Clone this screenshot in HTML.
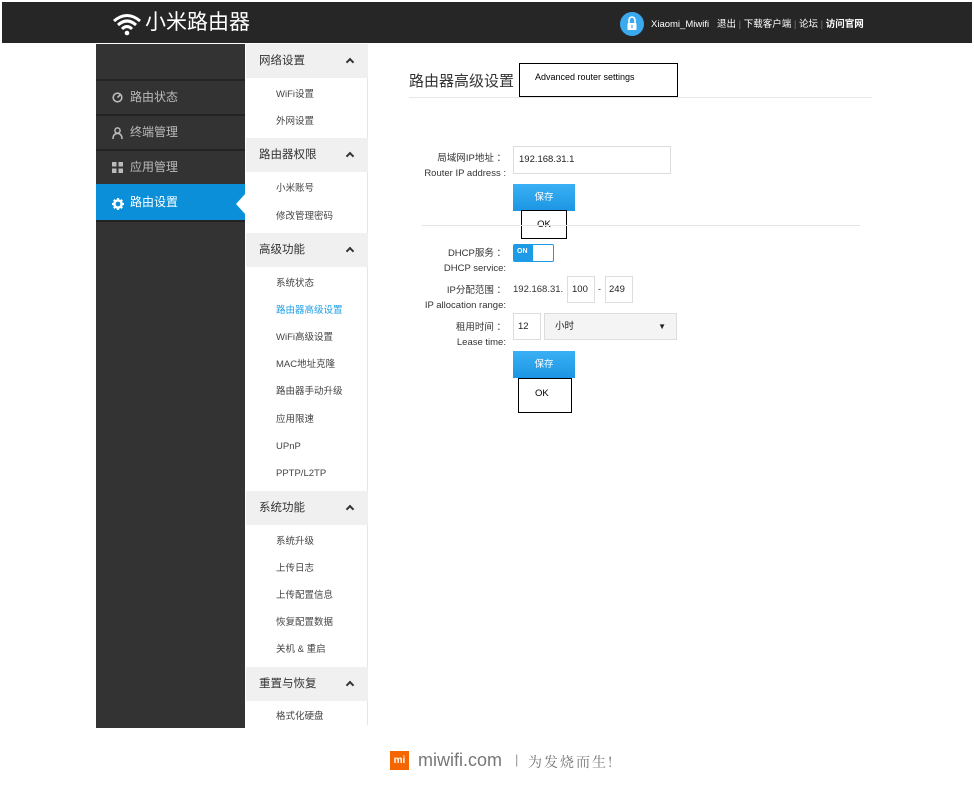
<!DOCTYPE html>
<html><head><meta charset="utf-8"><style>
*{margin:0;padding:0;box-sizing:border-box}
body{width:974px;height:786px;background:#fff;position:relative;overflow:hidden;font-family:"Liberation Sans","Noto Sans CJK SC",sans-serif;font-size:10px;color:#333}
.a{position:absolute}
.top{left:2px;top:2px;width:970px;height:41px;background:#262626}
.side{left:96px;top:44px;width:149px;height:684px;background:#333}
.si{position:absolute;left:0;width:149px;height:33px;background:#333;border-top:2px solid #232323;color:#bbb;font-size:12px;line-height:33px;padding-left:34px}
.si svg{position:absolute;left:16px;top:11px}
.sub{left:246px;top:44px;width:122px;height:681px;border-right:1px solid #e5e5e5}
.h{position:absolute;left:0;width:122px;height:34px;background:#f0f0f0;font-size:11.5px;line-height:34px;padding-left:13px;color:#333}
.h:after{content:"";position:absolute;right:15px;top:15px;width:4px;height:4px;border-left:2px solid #333;border-top:2px solid #333;transform:rotate(45deg)}
.it{position:absolute;left:30px;font-size:9.5px;color:#444;line-height:12px}
.lab{position:absolute;text-align:right;font-size:9.5px;color:#333;line-height:15px}
.inp{position:absolute;border:1px solid #ddd;background:#fff;font-size:9.5px;padding-left:5px;color:#222}
.btn{position:absolute;width:62px;height:27px;background:linear-gradient(#3ab1f5,#1c95e3);color:#fff;font-size:9.5px;text-align:center;line-height:27px}
.box{position:absolute;border:1px solid #000;background:#fff;font-size:9.5px;color:#000}
</style></head><body>
<div class="a top"></div>
<svg class="a" style="left:112px;top:13px" width="30" height="24" viewBox="0 0 30 24"><path d="M2 8 Q15 -3 28 8" stroke="#fff" stroke-width="3" fill="none"/><path d="M6 12 Q15 4 24 12" stroke="#fff" stroke-width="3" fill="none"/><path d="M10 16 Q15 11 20 16" stroke="#fff" stroke-width="3" fill="none"/><circle cx="15" cy="20" r="2.3" fill="#fff"/></svg>
<div class="a" style="left:145px;top:10px;color:#fff;font-size:21px;line-height:26px">小米路由器</div>
<div class="a" style="left:620px;top:12px;width:24px;height:24px;border-radius:50%;background:#3aa9ee"></div>
<svg class="a" style="left:626px;top:16px" width="12" height="15" viewBox="0 0 12 15"><path d="M3 7V4a3 3 0 0 1 6 0v3" stroke="#fff" stroke-width="1.6" fill="none"/><rect x="1.5" y="7" width="9" height="7" rx="1" fill="#fff"/><rect x="5.4" y="9" width="1.2" height="3" fill="#3aa9ee"/></svg>
<div class="a" style="left:651px;top:18px;color:#fff;font-size:9.5px;line-height:13px;white-space:nowrap">Xiaomi_Miwifi&nbsp;&nbsp;&nbsp;退出 <span style="color:#777">|</span> 下载客户端 <span style="color:#777">|</span> 论坛 <span style="color:#777">|</span> <b>访问官网</b></div>

<div class="a side">
<div class="si" style="top:35px;"><svg width="11" height="11" viewBox="0 0 11 11"><circle cx="5.5" cy="5.5" r="4.3" stroke="#bbb" stroke-width="1.6" fill="none"/><path d="M5.5 5.5L8 3" stroke="#bbb" stroke-width="1.6"/></svg>路由状态</div>
<div class="si" style="top:70px;"><svg width="11" height="12" viewBox="0 0 11 12"><circle cx="5.5" cy="3.5" r="2.6" stroke="#bbb" stroke-width="1.5" fill="none"/><path d="M1 12 Q1 6.5 5.5 6.5 Q10 6.5 10 12" stroke="#bbb" stroke-width="1.5" fill="none"/></svg>终端管理</div>
<div class="si" style="top:105px;"><svg width="11" height="11" viewBox="0 0 11 11"><rect x="0" y="0" width="4.5" height="4.5" fill="#bbb"/><rect x="6.5" y="0" width="4.5" height="4.5" fill="#bbb"/><rect x="0" y="6.5" width="4.5" height="4.5" fill="#bbb"/><rect x="6.5" y="6.5" width="4.5" height="4.5" fill="#bbb"/></svg>应用管理</div>
<div class="si" style="top:140px;background:#0a8fd8;color:#fff;border-top-color:#0a8fd8;height:36px"><svg width="12" height="12" viewBox="0 0 12 12" style="top:12px"><circle cx="6" cy="6" r="3.6" stroke="#fff" stroke-width="2.4" fill="none"/><g stroke="#fff" stroke-width="2.2"><path d="M6 0v2.5M6 9.5V12M0 6h2.5M9.5 6H12M1.8 1.8l1.8 1.8M8.4 8.4l1.8 1.8M1.8 10.2l1.8-1.8M8.4 3.6l1.8-1.8"/></g></svg>路由设置</div>
<div class="si" style="top:176px;height:2px;background:#232323;border:0"></div>
</div>
<svg class="a" style="left:236px;top:193px" width="10" height="22"><path d="M10 0 L0 11 L10 22Z" fill="#fff"/></svg>

<div class="a sub">
<div class="h" style="top:0">网络设置</div>
<div class="it" style="top:45px">WiFi设置</div>
<div class="it" style="top:72px">外网设置</div>
<div class="h" style="top:94px">路由器权限</div>
<div class="it" style="top:139px">小米账号</div>
<div class="it" style="top:167px">修改管理密码</div>
<div class="h" style="top:189px">高级功能</div>
<div class="it" style="top:234px">系统状态</div>
<div class="it" style="top:261px;color:#1ea0e8">路由器高级设置</div>
<div class="it" style="top:288px">WiFi高级设置</div>
<div class="it" style="top:315px">MAC地址克隆</div>
<div class="it" style="top:342px">路由器手动升级</div>
<div class="it" style="top:370px">应用限速</div>
<div class="it" style="top:397px">UPnP</div>
<div class="it" style="top:424px">PPTP/L2TP</div>
<div class="h" style="top:447px">系统功能</div>
<div class="it" style="top:492px">系统升级</div>
<div class="it" style="top:519px">上传日志</div>
<div class="it" style="top:546px">上传配置信息</div>
<div class="it" style="top:573px">恢复配置数据</div>
<div class="it" style="top:600px">关机 &amp; 重启</div>
<div class="h" style="top:623px">重置与恢复</div>
<div class="it" style="top:667px">格式化硬盘</div>
</div>

<div class="a" style="left:409px;top:72px;font-size:15px;color:#333;line-height:20px">路由器高级设置</div>
<div class="box" style="left:519px;top:63px;width:159px;height:34px;padding:8px 0 0 15px;font-size:9px">Advanced router settings</div>
<div class="a" style="left:409px;top:97px;width:463px;height:1px;background:#e8e8e8"></div>

<div class="lab" style="left:400px;top:151px;width:106px">局域网IP地址 ：<br>Router IP address :</div>
<div class="inp" style="left:513px;top:146px;width:158px;height:28px;line-height:26px">192.168.31.1</div>
<div class="btn" style="left:513px;top:184px">保存</div>
<div class="box" style="left:521px;top:210px;width:46px;height:29px;text-align:center;line-height:27px">OK</div>
<div class="a" style="left:422px;top:225px;width:438px;height:1px;background:#e5e5e5"></div>

<div class="lab" style="left:400px;top:246px;width:106px">DHCP服务 ：<br>DHCP service:</div>
<div class="a" style="left:513px;top:244px;width:41px;height:18px;background:#1e9be6;border-radius:2px;border:1px solid #1e9be6"><span style="position:absolute;left:3px;top:3px;color:#fff;font-size:7px;font-weight:bold">ON</span><div style="position:absolute;right:0;top:0;width:20px;height:16px;background:#fff;border-radius:1px"></div></div>
<div class="lab" style="left:400px;top:283px;width:106px">IP分配范围 ：<br>IP allocation range:</div>
<div class="a" style="left:513px;top:284px;font-size:9.5px;color:#333">192.168.31.</div>
<div class="inp" style="left:567px;top:276px;width:28px;height:27px;line-height:25px;padding-left:4px">100</div>
<div class="a" style="left:598px;top:284px;font-size:9px">-</div>
<div class="inp" style="left:605px;top:276px;width:28px;height:27px;line-height:25px;padding-left:3px">249</div>
<div class="lab" style="left:400px;top:320px;width:106px">租用时间 ：<br>Lease time:</div>
<div class="inp" style="left:513px;top:313px;width:28px;height:27px;line-height:25px;padding-left:4px">12</div>
<div class="inp" style="left:544px;top:313px;width:133px;height:27px;line-height:25px;padding-left:10px;background:#f4f4f4">小时<span style="position:absolute;right:10px;top:0;font-size:8px">▼</span></div>
<div class="btn" style="left:513px;top:351px">保存</div>
<div class="box" style="left:518px;top:378px;width:54px;height:35px;padding:9px 0 0 16px;line-height:12px">OK</div>

<div class="a" style="left:390px;top:751px;width:19px;height:19px;background:#f56600;color:#fff;font-size:10px;font-weight:bold;text-align:center;line-height:19px">mi</div>
<div class="a" style="left:418px;top:749px;font-size:18px;color:#777;line-height:22px">miwifi.com</div>
<div class="a" style="left:515px;top:752px;font-size:13px;color:#999">|</div>
<div class="a" style="left:528px;top:752px;font-size:14px;color:#777;font-family:'Noto Serif CJK SC',serif;letter-spacing:2px">为发烧而生!</div>
</body></html>
